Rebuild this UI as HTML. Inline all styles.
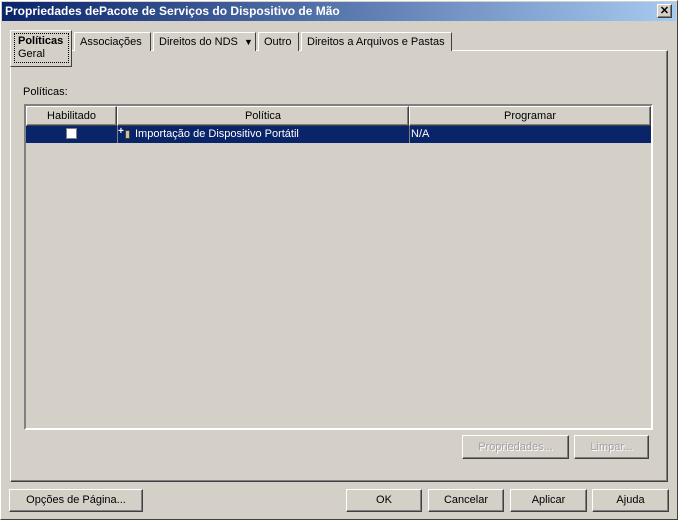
<html><head><style>
body{margin:0;width:678px;height:520px;background:#d4d0c8;font-family:"Liberation Sans",sans-serif;font-size:11px;position:relative;overflow:hidden}
.a{position:absolute;white-space:nowrap}
.win{left:0;top:0;width:676px;height:518px;border:1px solid;border-color:#fff #404040 #404040 #fff}
.title{left:2px;top:2px;width:674px;height:19px;background:linear-gradient(90deg,#0a246a,#a6caf0);color:#fff;font-weight:bold;font-size:12px;line-height:19px;text-indent:3px}
.btn{border:1px solid;border-color:#fff #404040 #404040 #fff;box-shadow:inset -1px -1px #808080;text-align:center;box-sizing:border-box;background:#d4d0c8}
.tab{top:32px;height:19px;border:1px solid;border-color:#fff #404040 transparent #fff;border-bottom:none;line-height:18px;padding:0 5px;box-sizing:border-box;background:#d4d0c8}
.dis{color:#a0a0a0;text-shadow:1px 1px #fff}
</style></head><body>
<div class="a win"></div>
<div class="a title">Propriedades dePacote de Serviços do Dispositivo de Mão</div>
<div class="a btn" style="left:657px;top:4px;width:15px;height:14px;line-height:12px;font-weight:bold;font-size:11px;color:#000">✕</div>
<div class="a" style="left:10px;top:50px;width:656px;height:430px;border:1px solid;border-color:#fff #404040 #404040 #fff;box-shadow:inset -1px -1px #808080"></div>
<div class="a tab" style="left:74px;width:77px">Associações</div>
<div class="a tab" style="left:153px;width:103px">Direitos do NDS &nbsp;<span style="font-size:9px">▼</span></div>
<div class="a tab" style="left:258px;width:41px">Outro</div>
<div class="a tab" style="left:301px;width:151px">Direitos a Arquivos e Pastas</div>
<div class="a" style="left:10px;top:30px;width:62px;height:37px;border:1px solid;border-color:#fff #404040 #404040 #fff;background:#d4d0c8;box-sizing:border-box"></div>
<div class="a" style="left:14px;top:33px;width:55px;height:30px;border:1px dotted #000;box-sizing:border-box;line-height:13px;padding:1px 3px"><b>Políticas</b><br>Geral</div>
<div class="a" style="left:23px;top:86px">Políticas:</div>
<div class="a" style="left:24px;top:104px;width:629px;height:326px;border:2px solid;border-color:#808080 #fff #fff #808080;box-sizing:border-box;background:#d4d0c8">
 <div class="a btn" style="left:0;top:0;width:91px;height:20px;line-height:18px">Habilitado</div>
 <div class="a btn" style="left:91px;top:0;width:292px;height:20px;line-height:18px">Política</div>
 <div class="a btn" style="left:383px;top:0;width:242px;height:20px;line-height:18px">Programar</div>
 <div class="a" style="left:0;top:20px;width:625px;height:17px;background:#0a246a;color:#fff;line-height:17px">
  <div class="a" style="left:40px;top:2px;width:11px;height:11px;background:#fff;border:1px solid #808080;box-sizing:border-box"></div>
  <div class="a" style="left:92px;top:-3px;font-weight:bold;font-size:10px">+</div>
  <div class="a" style="left:99px;top:4px;width:5px;height:9px;background:#c8c8a0;border:1px solid #404040;box-sizing:border-box"></div>
  <div class="a" style="left:109px;top:0">Importação de Dispositivo Portátil</div>
  <div class="a" style="left:383px;top:0;border-left:1px solid #808080;padding-left:1px;height:17px">N/A</div>
  <div class="a" style="left:91px;top:0;height:17px;border-left:1px solid #808080"></div>
 </div>
</div>
<div class="a btn dis" style="left:462px;top:435px;width:107px;height:24px;line-height:22px">Propriedades...</div>
<div class="a btn dis" style="left:574px;top:435px;width:75px;height:24px;line-height:22px">Limpar...</div>
<div class="a btn" style="left:9px;top:489px;width:134px;height:23px;line-height:21px">Opções de Página...</div>
<div class="a btn" style="left:346px;top:489px;width:76px;height:23px;line-height:21px">OK</div>
<div class="a btn" style="left:428px;top:489px;width:76px;height:23px;line-height:21px">Cancelar</div>
<div class="a btn" style="left:510px;top:489px;width:77px;height:23px;line-height:21px">Aplicar</div>
<div class="a btn" style="left:592px;top:489px;width:77px;height:23px;line-height:21px">Ajuda</div>
</body></html>
